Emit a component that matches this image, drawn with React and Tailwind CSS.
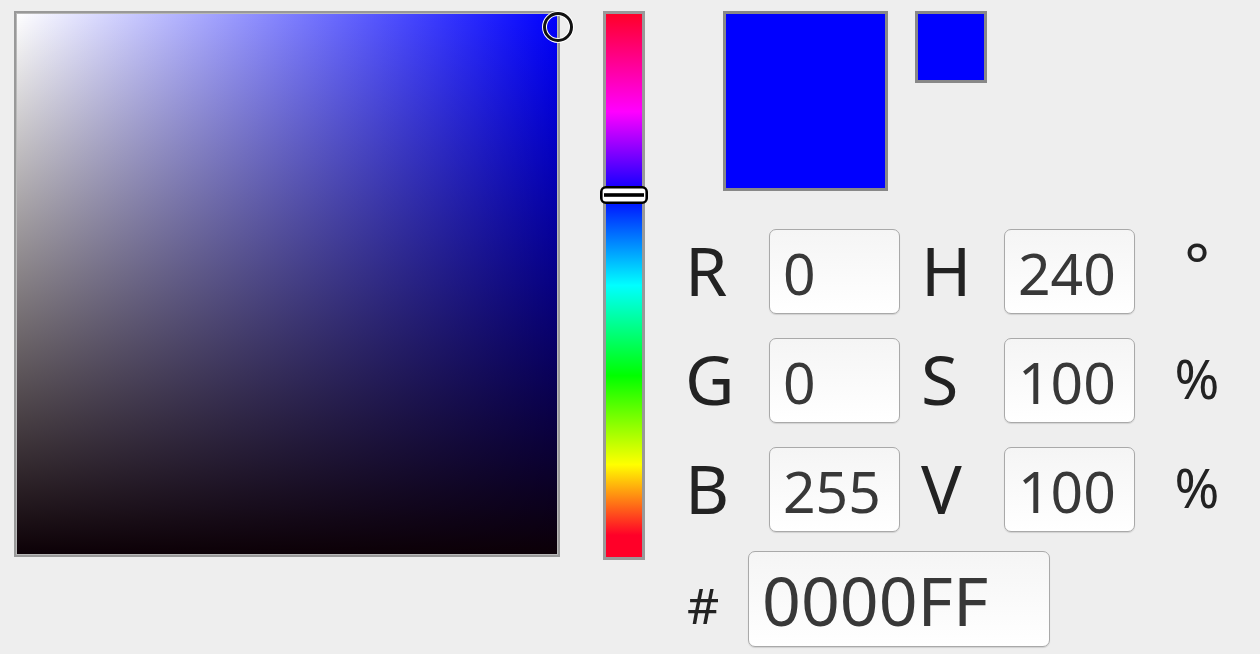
const font = { fontFamily: '"Noto Sans", "Open Sans", sans-serif' };

const Field = ({ value, className = '' }) => (
  <div
    className={`shrink-0 h-[85px] w-[131px] rounded-[7px] border border-[#a9a9a9] bg-gradient-to-b from-[#f5f5f5] to-white pl-[13px] flex items-center text-[57px] leading-none text-[#383838] shadow-[0_1px_1px_rgba(0,0,0,0.12)] ${className}`}
  >
    <span className="mt-[4px]">{value}</span>
  </div>
);

const Label = ({ children, className = '' }) => (
  <div className={`shrink-0 text-[68px] leading-none text-[#222] ${className}`}>{children}</div>
);

const rows = [
  { a: 'R', av: '0', b: 'H', bv: '240', unit: '°' },
  { a: 'G', av: '0', b: 'S', bv: '100', unit: '%' },
  { a: 'B', av: '255', b: 'V', bv: '100', unit: '%' },
];

export default function App() {
  return (
    <div
      className="w-[1260px] h-[654px] bg-[#eeeeee] flex items-start pl-[14px] pt-[11px] overflow-hidden"
      style={font}
    >
      {/* saturation / value square */}
      <div className="relative shrink-0 w-[546px] h-[546px] border-2 border-[#999] shadow-[inset_0_0_0_1px_#b8b8b8] bg-[linear-gradient(to_top,#0c0006,transparent),linear-gradient(to_right,#fff,#00f)]">
        <svg className="absolute left-[526px] top-[-2px] overflow-visible" width="32" height="32">
          <circle cx="16" cy="16" r="13.5" fill="none" stroke="#fff" strokeWidth="5" />
          <circle cx="16" cy="16" r="13.5" fill="none" stroke="#111" strokeWidth="3" />
        </svg>
      </div>

      {/* hue bar */}
      <div className="relative shrink-0 ml-[43px] w-[42px] h-[549px] border-[3px] border-[#999] bg-[linear-gradient(to_bottom,#ff0028,#f0f_18%,#00f_33.3%,#0ff_50%,#0f0_66.6%,#ff0_83%,#ff0028_96%,#ff0028)]">
        <svg className="absolute left-[-6px] top-[172px] overflow-visible" width="48" height="18">
          <rect x="1.3" y="1.3" width="45.4" height="15.4" rx="4.5" fill="#fff" stroke="#000" strokeWidth="2.6" />
          <rect x="4" y="7.2" width="40" height="3.6" fill="#000" />
        </svg>
      </div>

      {/* right panel */}
      <div className="shrink-0 ml-[42px] flex flex-col">
        <div className="flex items-start pl-[36px]">
          <div className="shrink-0 w-[165px] h-[180px] border-[3px] border-[#888] bg-[#0000ff]" />
          <div className="shrink-0 ml-[27px] w-[72px] h-[72px] border-[3px] border-[#888] bg-[#0000ff]" />
        </div>

        <div className="mt-[38px] flex flex-col gap-[24px]">
          {rows.map((r) => (
            <div key={r.a} className="flex items-center">
              <Label className="w-[82px] ml-[-2px] pr-[-2px] mt-[-4px]">{r.a}</Label>
              <div className="w-[2px] shrink-0" />
              <Field value={r.av} />
              <Label className="w-[104px] pl-[21px] mt-[-4px]">{r.b}</Label>
              <Field value={r.bv} />
              <div className="shrink-0 w-[124px] text-center text-[54px] leading-none text-[#222]">
                <span className={r.unit === '°' ? 'relative top-[-8px] text-[60px]' : 'relative top-[-3px]'}>{r.unit}</span>
              </div>
            </div>
          ))}
        </div>

        <div className="mt-[19px] flex items-center">
          <div className="shrink-0 w-[61px] text-[50px] leading-none text-[#222] mt-[12px]">#</div>
          <div className="shrink-0 h-[96px] w-[302px] rounded-[7px] border border-[#a9a9a9] bg-gradient-to-b from-[#f5f5f5] to-white pl-[13px] flex items-center text-[68px] leading-none text-[#383838] shadow-[0_1px_1px_rgba(0,0,0,0.12)]">
            <span className="mt-[2px]">0000FF</span>
          </div>
        </div>
      </div>
    </div>
  );
}
